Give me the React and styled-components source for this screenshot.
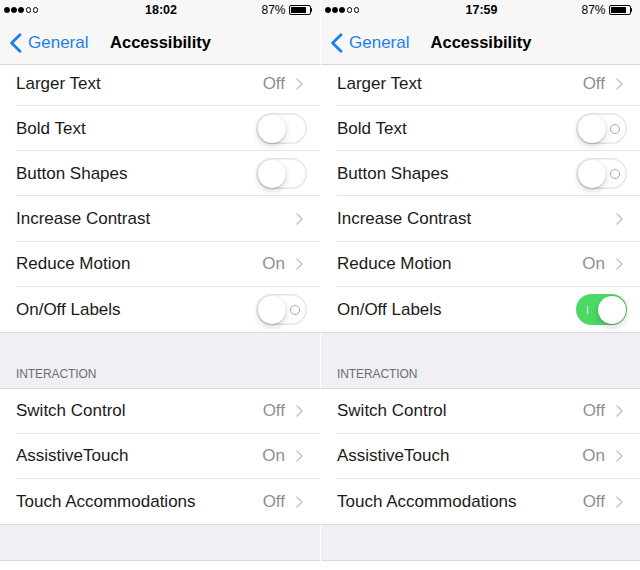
import React from 'react'
import styled, { createGlobalStyle } from 'styled-components'

const GlobalStyle = createGlobalStyle`
  html, body {
    margin: 0;
    padding: 0;
    background: #fff;
  }
  body {
    font-family: "Liberation Sans", Arial, Helvetica, sans-serif;
    -webkit-font-smoothing: antialiased;
  }
`

const Screens = styled.div`
  display: flex;
  width: 640px;
  height: 570px;
  overflow: hidden;
  background: #fff;
`

const Phone = styled.div`
  width: ${(p) => (p.$right ? '319px' : '320px')};
  margin-left: ${(p) => (p.$right ? '1px' : '0')};
  height: 570px;
  display: flex;
  flex-direction: column;
  background: #efeff4;
  overflow: hidden;
`

const Chrome = styled.div`
  background: #f7f7f8;
  border-bottom: 1px solid #d6d6da;
`

const StatusBar = styled.div`
  height: 20px;
  display: grid;
  grid-template-columns: 1fr auto 1fr;
  align-items: center;
  padding: 0 4px 0 4px;
  font-size: 12px;
  color: #000;
`

const Signal = styled.div`
  display: flex;
  gap: 1.6px;
`

const Dot = styled.span`
  width: 5.6px;
  height: 5.6px;
  border-radius: 50%;
  box-sizing: border-box;
  background: ${(p) => (p.$on ? '#000' : 'transparent')};
  border: 1px solid #000;
`

const Time = styled.div`
  font-weight: 700;
  font-size: 12.5px;
  padding-left: 2px;
`

const Battery = styled.div`
  justify-self: end;
  display: flex;
  align-items: center;
  gap: 3px;
  padding-right: 4px;
`

const BatteryBody = styled.span`
  display: flex;
  align-items: center;
  width: 22px;
  height: 10px;
  box-sizing: border-box;
  border: 1px solid #000;
  border-radius: 2px;
  padding: 1px;
  &::before {
    content: '';
    width: 88%;
    height: 100%;
    background: #000;
    border-radius: 0.5px;
  }
`

const BatteryNub = styled.span`
  width: 1.5px;
  height: 4px;
  background: #000;
  margin-left: -3px;
  border-radius: 0 1px 1px 0;
`

const NavBar = styled.div`
  height: 44px;
  display: grid;
  grid-template-columns: 1fr auto 1fr;
  align-items: center;
  padding-top: 1px;
  box-sizing: border-box;
`

const Back = styled.div`
  display: flex;
  align-items: center;
  gap: 6px;
  padding-left: 9px;
  color: #1f7fe8;
  font-size: 17px;
`

const Title = styled.div`
  font-size: 16.5px;
  font-weight: 700;
  color: #000;
  padding-left: 1px;
`

const Group = styled.div`
  background: #fff;
  border-top: ${(p) => (p.$top ? '1px solid #d9d9de' : 'none')};
  border-bottom: 1px solid #d9d9de;
`

const Row = styled.div`
  height: ${(p) => p.$height || 45}px;
  padding-left: 16px;
  display: flex;
  box-sizing: border-box;
  &:last-child > div {
    border-bottom: none;
  }
`

const RowInner = styled.div`
  flex: 1;
  display: flex;
  align-items: center;
  border-bottom: 1px solid #e3e3e6;
  padding-right: ${(p) => (p.$switch ? '13px' : '17px')};
  padding-bottom: ${(p) => p.$lift || 0}px;
  padding-top: ${(p) => (p.$lift ? 0 : 1)}px;
`

const Label = styled.div`
  flex: 1;
  font-size: 17px;
  color: #1a1a1a;
`

const Value = styled.div`
  font-size: 17px;
  color: #8e8e93;
  margin-right: 11px;
`

const SectionHeader = styled.div`
  height: 55px;
  display: flex;
  align-items: flex-end;
  padding: 0 16px 7px;
  box-sizing: border-box;
  font-size: 12px;
  color: #6d6d72;
  letter-spacing: -0.1px;
`

const Spacer = styled.div`
  height: 35px;
`

const Footer = styled.div`
  flex: 1;
  background: #fff;
  border-top: 1px solid #d9d9de;
`

const Track = styled.div`
  position: relative;
  width: 51px;
  height: 31px;
  border-radius: 16px;
  box-sizing: border-box;
  background: ${(p) => (p.$on ? '#4cd964' : '#fff')};
  box-shadow: ${(p) => (p.$on ? 'none' : 'inset 0 0 0 1.5px #e6e6e9')};
`

const Knob = styled.span`
  position: absolute;
  top: 1.5px;
  left: ${(p) => (p.$on ? '21.5px' : '1.5px')};
  width: 28px;
  height: 28px;
  border-radius: 50%;
  background: #fff;
  box-shadow: 0 3px 7px rgba(0, 0, 0, 0.16), 0 1px 1px rgba(0, 0, 0, 0.14),
    0 0 0 0.5px rgba(0, 0, 0, 0.06);
`

const OffMark = styled.span`
  position: absolute;
  left: 34px;
  top: 10.5px;
  width: 10px;
  height: 10px;
  box-sizing: border-box;
  border: 1.2px solid #a8a8ac;
  border-radius: 50%;
`

const OnMark = styled.span`
  position: absolute;
  left: 10.5px;
  top: 11.5px;
  width: 1.5px;
  height: 8px;
  background: #fff;
`

function Chevron({ color = '#c7c7cc', width = 7, height = 12, stroke = 1.6 }) {
  return (
    <svg width={width} height={height} viewBox="0 0 7 12" fill="none">
      <path
        d="M1 1l5 5-5 5"
        stroke={color}
        strokeWidth={stroke}
        strokeLinecap="round"
        strokeLinejoin="round"
      />
    </svg>
  )
}

function Switch({ on, labels }) {
  return (
    <Track $on={on}>
      {labels && (on ? <OnMark /> : <OffMark />)}
      <Knob $on={on} />
    </Track>
  )
}

function SettingRow({ label, value, toggle, height, lift }) {
  return (
    <Row $height={height}>
      <RowInner $switch={!!toggle} $lift={lift}>
        <Label>{label}</Label>
        {toggle ? (
          <Switch on={toggle.on} labels={toggle.labels} />
        ) : (
          <>
            {value && <Value>{value}</Value>}
            <Chevron />
          </>
        )}
      </RowInner>
    </Row>
  )
}

function Screen({ time, labels, onOff, right }) {
  return (
    <Phone $right={right}>
      <Chrome>
        <StatusBar>
          <Signal>
            {[1, 1, 1, 0, 0].map((on, i) => (
              <Dot key={i} $on={on} />
            ))}
          </Signal>
          <Time>{time}</Time>
          <Battery>
            87%
            <BatteryBody />
            <BatteryNub />
          </Battery>
        </StatusBar>
        <NavBar>
          <Back>
            <svg width="13" height="20" viewBox="0 0 13 20" fill="none">
              <path
                d="M11 1.8L2.6 10l8.4 8.2"
                stroke="#1f7fe8"
                strokeWidth="2.8"
                strokeLinecap="round"
                strokeLinejoin="round"
              />
            </svg>
            General
          </Back>
          <Title>Accessibility</Title>
          <div />
        </NavBar>
      </Chrome>

      <Group>
        <SettingRow label="Larger Text" value="Off" height={41} lift={3} />
        <SettingRow label="Bold Text" height={45.2} toggle={{ on: false, labels }} />
        <SettingRow label="Button Shapes" height={45.2} toggle={{ on: false, labels }} />
        <SettingRow label="Increase Contrast" height={45.2} />
        <SettingRow label="Reduce Motion" value="On" height={45.2} />
        <SettingRow label="On/Off Labels" height={45.2} toggle={{ on: onOff, labels: true }} />
      </Group>

      <SectionHeader>INTERACTION</SectionHeader>
      <Group $top>
        <SettingRow label="Switch Control" value="Off" />
        <SettingRow label="AssistiveTouch" value="On" />
        <SettingRow label="Touch Accommodations" value="Off" />
      </Group>
      <Spacer />
      <Footer />
    </Phone>
  )
}

export default function App() {
  return (
    <>
      <GlobalStyle />
      <Screens>
        <Screen time="18:02" labels={false} onOff={false} />
        <Screen time="17:59" labels onOff right />
      </Screens>
    </>
  )
}
